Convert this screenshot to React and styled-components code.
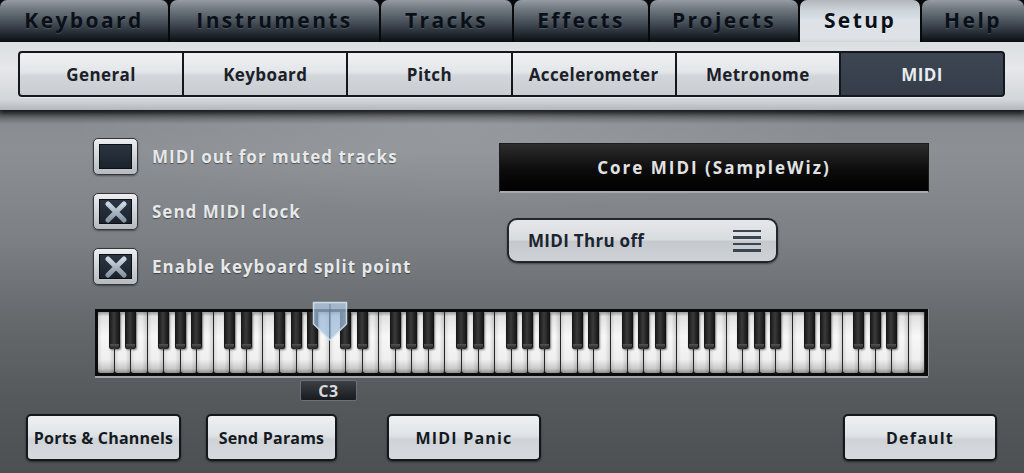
import React from "react";
import styled, { createGlobalStyle } from "styled-components";

const TABS = [
  { label: "Keyboard", width: 168 },
  { label: "Instruments", width: 209 },
  { label: "Tracks", width: 131 },
  { label: "Effects", width: 134 },
  { label: "Projects", width: 148 },
  { label: "Setup", width: 120, active: true },
  { label: "Help", width: 102 },
];

const SECTIONS = ["General", "Keyboard", "Pitch", "Accelerometer", "Metronome", "MIDI"];

const OPTIONS = [
  { label: "MIDI out for muted tracks", checked: false },
  { label: "Send MIDI clock", checked: true },
  { label: "Enable keyboard split point", checked: true },
];

// C..B pattern, true = black key after this white key
const OCTAVE = [true, true, false, true, true, true, false];
const WHITE_KEYS = Array.from({ length: 50 }, (_, i) => i < 49 && OCTAVE[i % 7]);

function CrossMark() {
  return (
    <svg width="26" height="22" viewBox="0 0 26 22">
      <defs>
        <linearGradient id="xg" x1="0" y1="0" x2="0" y2="1">
          <stop offset="0" stopColor="#ccd6e0" />
          <stop offset="1" stopColor="#8795a3" />
        </linearGradient>
      </defs>
      <path d="M5 3 L21 19 M21 3 L5 19" stroke="url(#xg)" strokeWidth="5" strokeLinecap="round" />
    </svg>
  );
}

function SplitHandle() {
  return (
    <svg width="36" height="41" viewBox="0 0 36 41">
      <path
        d="M1.5 1.5 H34.5 V23 L18 39 L1.5 23 Z"
        fill="rgba(160,190,220,0.72)"
        stroke="rgba(210,225,240,0.9)"
        strokeWidth="1.5"
      />
      <path d="M1.5 1.5 H34.5 V8 H1.5 Z" fill="rgba(255,255,255,0.18)" />
      <line x1="18" y1="3" x2="18" y2="38" stroke="rgba(80,110,140,0.7)" strokeWidth="1" />
    </svg>
  );
}

function App() {
  return (
    <>
      <GlobalStyle />
      <Screen>
        <TabBar>
          {TABS.map((t) => (
            <Tab key={t.label} $w={t.width} $active={t.active}>
              {t.label}
            </Tab>
          ))}
        </TabBar>

        <SubBar>
          <Segments>
            {SECTIONS.map((s) => (
              <Segment key={s} $active={s === "MIDI"}>
                {s}
              </Segment>
            ))}
          </Segments>
        </SubBar>

        <Main>
          <Upper>
            <Options>
              {OPTIONS.map((o) => (
                <OptionRow key={o.label}>
                  <CheckBox>
                    <CheckInner>{o.checked && <CrossMark />}</CheckInner>
                  </CheckBox>
                  {o.label}
                </OptionRow>
              ))}
            </Options>
            <RightColumn>
              <PortDisplay>Core MIDI (SampleWiz)</PortDisplay>
              <Dropdown>
                MIDI Thru off
                <MenuIcon>
                  <span />
                  <span />
                  <span />
                  <span />
                </MenuIcon>
              </Dropdown>
            </RightColumn>
          </Upper>

          <KeyboardArea>
            <KeyFrame>
              {WHITE_KEYS.map((hasBlack, i) => (
                <WhiteKey key={i}>{hasBlack && <BlackKey />}</WhiteKey>
              ))}
              <Handle>
                <SplitHandle />
              </Handle>
            </KeyFrame>
            <NoteLabel>C3</NoteLabel>
          </KeyboardArea>

          <BottomRow>
            <Button $w={155}>Ports &amp; Channels</Button>
            <Button $w={131} $ml={25}>Send Params</Button>
            <Button $w={154} $ml={50} $wide>MIDI Panic</Button>
            <Button $w={154} $ml="auto" $wide>Default</Button>
          </BottomRow>
        </Main>
      </Screen>
    </>
  );
}

const GlobalStyle = createGlobalStyle`
  html, body {
    margin: 0;
    padding: 0;
    background: #1a1c1e;
  }

  #root {
    width: 1024px;
    height: 473px;
    overflow: hidden;
  }
`;

const Screen = styled.div`
  width: 1024px;
  height: 473px;
  display: flex;
  flex-direction: column;
  overflow: hidden;

  font-family: "Open Sans", "DejaVu Sans", sans-serif;
  font-weight: 700;
`;

const TabBar = styled.div`
  height: 42px;
  flex-shrink: 0;
  display: flex;
  gap: 2px;
  background: #07090b;
`;

const Tab = styled.div`
  width: ${(p) => p.$w}px;
  flex-shrink: 0;
  padding-bottom: 3px;
  box-sizing: border-box;
  border-radius: 7px 7px 0 0;

  display: flex;
  justify-content: center;
  align-items: center;

  font-size: 21px;
  letter-spacing: 2.4px;
  color: #0a1019;
  background: ${(p) =>
    p.$active
      ? "linear-gradient(#b2b7bd 0%, #cdd3da 25%, #dde2e8 50%, #dfe2e5 100%)"
      : "linear-gradient(#959ca3 0%, #6f777f 22%, #4b535c 50%, #262d35 78%, #0b0f13 100%)"};
  text-shadow: ${(p) =>
    p.$active ? "0 1px 0 rgba(255,255,255,0.6)" : "0 1px 0 rgba(255,255,255,0.12)"};
`;

const SubBar = styled.div`
  height: 68px;
  flex-shrink: 0;
  padding: 9px 19px 0 18px;
  box-sizing: border-box;
  background: linear-gradient(#dcdfe2 0%, #e5e7ea 40%, #d3d6d9 85%, #b4b8bc 100%);
  box-shadow: 0 3px 5px rgba(0, 0, 0, 0.65);
  position: relative;
  z-index: 1;
`;

const Segments = styled.div`
  height: 46px;
  display: flex;
  gap: 2px;
  border: 2px solid #14181c;
  border-radius: 4px;
  overflow: hidden;
  background: #14181c;
  box-sizing: border-box;
  box-shadow: 0 1px 0 rgba(255, 255, 255, 0.5);
`;

const Segment = styled.div`
  flex: 1;
  display: flex;
  justify-content: center;
  align-items: center;

  font-size: 17px;
  letter-spacing: 0.4px;
  color: ${(p) => (p.$active ? "#e9ecef" : "#1b2028")};
  background: ${(p) =>
    p.$active
      ? "linear-gradient(#3d4653, #353d49)"
      : "linear-gradient(#f0f1f3 0%, #e3e6e9 45%, #d2d6da 55%, #c9cdd1 100%)"};
`;

const Main = styled.div`
  flex: 1;
  display: flex;
  flex-direction: column;
  padding-top: 28px;
  box-sizing: border-box;
  background: radial-gradient(ellipse 55% 35% at 45% 4%, rgba(255, 255, 255, 0.1), transparent 70%),
    linear-gradient(#3a3d40 0px, #898d91 14px, #8c9094 40px, #7c8084 130px, #66696c 210px, #56595c 290px, #4d5053 363px);
`;

const Upper = styled.div`
  height: 146px;
  display: flex;
  padding-left: 93px;
`;

const Options = styled.div`
  width: 406px;
  display: flex;
  flex-direction: column;
  gap: 18px;
`;

const OptionRow = styled.div`
  height: 37px;
  display: flex;
  align-items: center;
  gap: 14px;

  font-size: 17px;
  letter-spacing: 1px;
  color: #e6e8ea;
  text-shadow: 0 1px 1px rgba(0, 0, 0, 0.45);
`;

const CheckBox = styled.div`
  width: 45px;
  height: 37px;
  flex-shrink: 0;
  padding: 5px;
  box-sizing: border-box;
  border: 1px solid #33373b;
  border-radius: 5px;
  background: linear-gradient(#eceef0, #b6babe);
  box-shadow: 0 1px 2px rgba(0, 0, 0, 0.4);
`;

const CheckInner = styled.div`
  width: 100%;
  height: 100%;
  box-sizing: border-box;
  border: 1px solid #0c1014;
  background: linear-gradient(#2b3541, #1a222c);

  display: flex;
  justify-content: center;
  align-items: center;
`;

const RightColumn = styled.div`
  width: 430px;
  margin-top: 5px;
  display: flex;
  flex-direction: column;
  align-items: flex-start;
`;

const PortDisplay = styled.div`
  width: 100%;
  height: 50px;
  box-sizing: border-box;
  border: 1px solid #1c1c1c;
  border-bottom: 2px solid #a6aaae;
  background: linear-gradient(#2c2c2c 0%, #0c0c0c 55%, #000 100%);

  display: flex;
  justify-content: center;
  align-items: center;

  font-size: 17px;
  letter-spacing: 2px;
  color: #e2e2e2;
`;

const Dropdown = styled.div`
  width: 271px;
  height: 45px;
  margin: 25px 0 0 8px;
  padding: 0 15px 0 19px;
  box-sizing: border-box;
  border: 2px solid #22272c;
  border-radius: 10px;
  background: linear-gradient(#e5e7ea 0%, #d9dcdf 48%, #c5c9cd 52%, #cfd2d5 100%);
  box-shadow: 0 1px 2px rgba(0, 0, 0, 0.4);

  display: flex;
  justify-content: space-between;
  align-items: center;

  font-size: 17px;
  letter-spacing: 0.3px;
  color: #1c2430;
`;

const MenuIcon = styled.div`
  width: 28px;
  display: flex;
  flex-direction: column;
  gap: 4px;

  span {
    height: 2.5px;
    background: #3b4551;
  }
`;

const KeyboardArea = styled.div`
  width: 833px;
  margin: 25px 0 0 95px;
  display: flex;
  flex-direction: column;
`;

const KeyFrame = styled.div`
  height: 67px;
  position: relative;
  display: flex;
  box-sizing: border-box;
  border: 3px solid #0b0b0b;
  background: #0b0b0b;
  box-shadow: 0 2px 0 #a3a7ab, 1px 0 0 #8a8e92;
`;

const WhiteKey = styled.div`
  flex: 1;
  position: relative;
  box-sizing: border-box;
  border-right: 1px solid #262626;
  border-radius: 0 0 2px 2px;
  background: linear-gradient(90deg, rgba(0, 0, 0, 0.1), transparent 25%, transparent 70%, rgba(0, 0, 0, 0.14)),
    linear-gradient(#9c9c9c 0%, #e2e2e2 7%, #f7f7f7 40%, #efefef 78%, #c9c9c9 93%, #8e8e8e 100%);

  &:last-of-type {
    border-right: none;
  }
`;

const BlackKey = styled.div`
  position: absolute;
  top: 0;
  right: -6px;
  width: 11px;
  height: 37px;
  z-index: 2;
  border-radius: 0 0 2px 2px;
  background: linear-gradient(90deg, #151515, #3a3a3a 45%, #101010);
  box-shadow: 1px 1px 2px rgba(0, 0, 0, 0.5);

  &::after {
    content: "";
    position: absolute;
    left: 1px;
    right: 1px;
    bottom: 1px;
    height: 4px;
    background: linear-gradient(#555, #2a2a2a);
    border-radius: 0 0 2px 2px;
  }
`;

const Handle = styled.div`
  position: absolute;
  left: 214px;
  top: -11px;
  z-index: 3;
  line-height: 0;
`;

const NoteLabel = styled.div`
  width: 57px;
  height: 21px;
  margin: 4px 0 0 205px;
  box-sizing: border-box;
  border: 1px solid #6c7074;
  border-radius: 2px;
  background: linear-gradient(#3c4044, #181b1e);

  display: flex;
  justify-content: center;
  align-items: center;

  font-size: 16px;
  letter-spacing: 0.5px;
  color: #d8dadc;
`;

const BottomRow = styled.div`
  display: flex;
  margin-top: 13px;
  padding: 0 27px 0 26px;
`;

const Button = styled.div`
  width: ${(p) => p.$w}px;
  height: 47px;
  margin-left: ${(p) => (p.$ml === "auto" ? "auto" : `${p.$ml || 0}px`)};
  box-sizing: border-box;
  border: 2px solid #15181b;
  border-radius: 5px;
  background: linear-gradient(#eef0f2 0%, #e0e3e6 45%, #cfd3d7 55%, #d7dadd 100%);
  box-shadow: 0 1px 2px rgba(0, 0, 0, 0.5);

  display: flex;
  justify-content: center;
  align-items: center;

  font-size: 16px;
  letter-spacing: ${(p) => (p.$wide ? "1.2px" : "0.2px")};
  color: #141a22;
`;

export default App;
